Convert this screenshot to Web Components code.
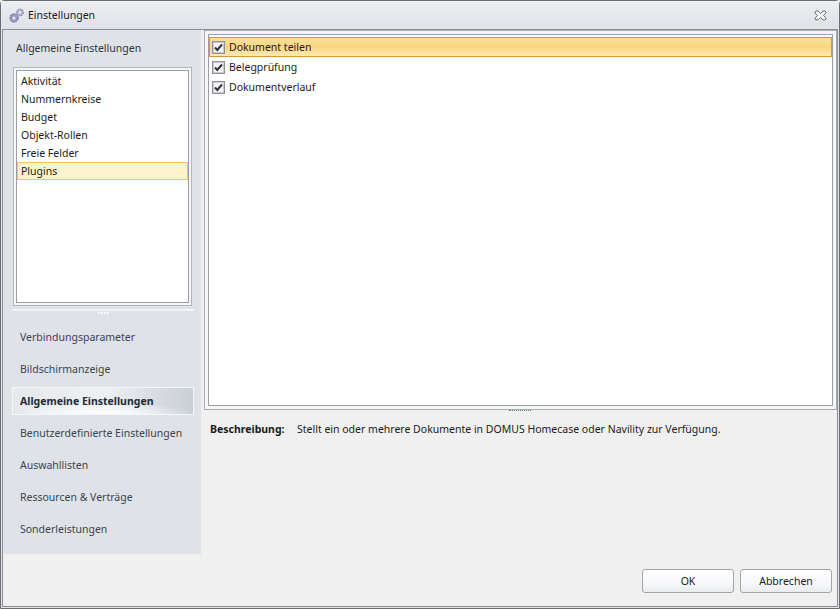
<!DOCTYPE html>
<html lang="de">
<head>
<meta charset="utf-8">
<title>Einstellungen</title>
<style>
    html, body { margin: 0; height: 100%; overflow: hidden; background: #f0f0f0; }
    body { font: 10.5px "Noto Sans", "DejaVu Sans", sans-serif; color: #1b1b1b; }
</style>
</head>
<body>
<settings-window title-text="Einstellungen">
    <nav-panel slot="side" heading="Allgemeine Einstellungen">
        <list-box slot="list">
            <list-row>Aktivität</list-row>
            <list-row>Nummernkreise</list-row>
            <list-row>Budget</list-row>
            <list-row>Objekt-Rollen</list-row>
            <list-row>Freie Felder</list-row>
            <list-row selected>Plugins</list-row>
        </list-box>
        <nav-item>Verbindungsparameter</nav-item>
        <nav-item>Bildschirmanzeige</nav-item>
        <nav-item active>Allgemeine Einstellungen</nav-item>
        <nav-item>Benutzerdefinierte Einstellungen</nav-item>
        <nav-item>Auswahllisten</nav-item>
        <nav-item>Ressourcen &amp; Verträge</nav-item>
        <nav-item>Sonderleistungen</nav-item>
    </nav-panel>
    <check-list slot="main">
        <check-row focused>Dokument teilen</check-row>
        <check-row>Belegprüfung</check-row>
        <check-row>Dokumentverlauf</check-row>
    </check-list>
    <description-line slot="main" label="Beschreibung:">Stellt ein oder mehrere Dokumente in DOMUS Homecase oder Navility zur Verfügung.</description-line>
    <dialog-button slot="buttons">OK</dialog-button>
    <dialog-button slot="buttons">Abbrechen</dialog-button>
</settings-window>

<script>
class SettingsWindow extends HTMLElement {
    constructor() {
        super();
        this.attachShadow({ mode: 'open' });
    }

    connectedCallback() {
        const title = this.getAttribute('title-text') || '';
        this.shadowRoot.innerHTML = `
            <style>
                :host {
                    display: flex;
                    flex-direction: column;
                    width: 840px;
                    height: 609px;
                    box-sizing: border-box;
                    border: 1px solid #6d6e72;
                    border-radius: 4px 4px 0 0;
                    background: #e2e5ea;
                }
                .bar {
                    flex: none;
                    height: 28px;
                    display: flex;
                    align-items: center;
                    gap: 3px;
                    padding: 0 8px 0 7px;
                    background: linear-gradient(#eceef1, #dfe2e7);
                    font-size: 10.5px;
                    color: #1a1a2a;
                }
                .bar svg.gear { width: 17px; height: 17px; }
                .bar span { flex: 1; }
                .bar svg.close { width: 13px; height: 11px; margin-right: 4px; }
                .frame {
                    flex: 1;
                    min-height: 0;
                    display: flex;
                    flex-direction: column;
                    margin: 0 1px 1px 1px;
                    border: 1px solid #8e9094;
                    background: #f0f0f0;
                }
                .body { flex: none; height: 524px; display: flex; }
                .side { flex: none; width: 198px; }
                .main { flex: 1; display: flex; flex-direction: column; padding-left: 3px; }
                .foot {
                    flex: 1;
                    display: flex;
                    justify-content: flex-end;
                    align-items: flex-start;
                    gap: 6px;
                    padding: 15px 5px 0 0;
                }
            </style>
            <div class="bar">
                <svg class="gear" viewBox="0 0 17 17">
                    <circle cx="6" cy="11" r="4.2" fill="#9a9bc4" stroke="#6d6e96" stroke-width="1" stroke-dasharray="2 1"/>
                    <circle cx="6" cy="11" r="1.5" fill="#eef"/>
                    <circle cx="12" cy="5.5" r="3.4" fill="#b4b5d4" stroke="#7a7ba2" stroke-width="1" stroke-dasharray="1.6 .9"/>
                    <circle cx="12" cy="5.5" r="1.2" fill="#f4f4fb"/>
                </svg>
                <span>${title}</span>
                <svg class="close" viewBox="0 0 13 11">
                    <path d="M1 2 2 1H4L6.5 3.5 9 1H11L12 2V3L9.5 5.5 12 8V9L11 10H9L6.5 7.5 4 10H2L1 9V8L3.5 5.5 1 3Z" fill="#f2f3f5" stroke="#6f7176"/>
                </svg>
            </div>
            <div class="frame">
                <div class="body">
                    <div class="side"><slot name="side"></slot></div>
                    <div class="main"><slot name="main"></slot></div>
                </div>
                <div class="foot"><slot name="buttons"></slot></div>
            </div>
        `;
    }
}

class NavPanel extends HTMLElement {
    constructor() {
        super();
        this.attachShadow({ mode: 'open' });
    }

    connectedCallback() {
        const heading = this.getAttribute('heading') || '';
        this.shadowRoot.innerHTML = `
            <style>
                :host {
                    display: block;
                    height: 100%;
                    background: #dfe3e8;
                    color: #2c3440;
                }
                .head { height: 37px; padding: 11px 0 0 13px; box-sizing: border-box; line-height: 14px; }
                .well {
                    width: 179px;
                    height: 239px;
                    margin-left: 10px;
                    padding: 2px;
                    box-sizing: border-box;
                    border: 1px solid #b4b6ba;
                    background: #f5f6f7;
                }
                .grip {
                    height: 8px;
                    margin: 3px 7px 0 9px;
                    width: 182px;
                    border-top: 2px solid #f3f4f6;
                    display: flex;
                    justify-content: center;
                    gap: 1px;
                    padding-top: 1px;
                }
                .grip i { width: 2px; height: 2px; background: #f6f7f8; }
                .items { display: flex; flex-direction: column; padding: 3px 0 0 9px; }
            </style>
            <div class="head">${heading}</div>
            <div class="well"><slot name="list"></slot></div>
            <div class="grip"><i></i><i></i><i></i><i></i></div>
            <div class="items"><slot></slot></div>
        `;
    }
}

class ListBox extends HTMLElement {
    constructor() {
        super();
        this.attachShadow({ mode: 'open' }).innerHTML = `
            <style>
                :host {
                    display: block;
                    height: 100%;
                    box-sizing: border-box;
                    border: 1px solid #9c9ea3;
                    background: #fff;
                    color: #1b1b1b;
                    padding-top: 1px;
                }
            </style>
            <slot></slot>
        `;
    }
}

class ListRow extends HTMLElement {
    constructor() {
        super();
        this.attachShadow({ mode: 'open' }).innerHTML = `
            <style>
                :host {
                    display: block;
                    height: 18px;
                    line-height: 16px;
                    box-sizing: border-box;
                    padding-left: 3px;
                    border: 1px solid transparent;
                }
                :host([selected]) {
                    background: #fff3cd;
                    border-color: #fdbf6a;
                }
            </style>
            <slot></slot>
        `;
    }
}

class NavItem extends HTMLElement {
    constructor() {
        super();
        this.attachShadow({ mode: 'open' }).innerHTML = `
            <style>
                :host {
                    display: block;
                    width: 182px;
                    height: 28px;
                    margin-bottom: 4px;
                    box-sizing: border-box;
                    padding-left: 7px;
                    line-height: 26px;
                    border: 1px solid transparent;
                    color: #3a4350;
                }
                :host([active]) {
                    font-weight: 700;
                    color: #232b36;
                    border-color: #f6f7f8;
                    background:
                        radial-gradient(90px 12px at 50% 100%, #ffffff, rgba(255,255,255,0)),
                        linear-gradient(90deg, #e6e8ec, #eef0f3 50%, #c9ced6);
                }
            </style>
            <slot></slot>
        `;
    }
}

class CheckList extends HTMLElement {
    constructor() {
        super();
        this.attachShadow({ mode: 'open' }).innerHTML = `
            <style>
                :host {
                    display: block;
                    height: 380px;
                    margin-top: 0;
                    box-sizing: border-box;
                    border: 1px solid #a9abaf;
                    padding: 3px;
                    background: #f5f6f7;
                }
                .inner {
                    height: 100%;
                    box-sizing: border-box;
                    border: 1px solid #9c9ea3;
                    background: #fff;
                    padding-top: 2px;
                }
            </style>
            <div class="inner"><slot></slot></div>
        `;
    }
}

class CheckRow extends HTMLElement {
    constructor() {
        super();
        this.attachShadow({ mode: 'open' }).innerHTML = `
            <style>
                :host {
                    display: flex;
                    align-items: center;
                    gap: 4px;
                    height: 20px;
                    box-sizing: border-box;
                    padding-left: 2px;
                    border: 1px solid transparent;
                    color: #1b1b1b;
                }
                :host([focused]) {
                    border-color: #d8953f;
                    background: linear-gradient(#fbdf9d, #f9d67f 50%, #fdeab8);
                }
                svg { width: 13px; height: 13px; flex: none; }
            </style>
            <svg viewBox="0 0 13 13">
                <rect x=".5" y=".5" width="12" height="12" fill="#e9eaee" stroke="#8f9196"/>
                <rect x="1.5" y="1.5" width="10" height="10" fill="#f4f4f6" stroke="#c9cbd0"/>
                <path d="M3 6.5 5.3 9 10 3.5" fill="none" stroke="#303236" stroke-width="2"/>
            </svg>
            <slot></slot>
        `;
    }
}

class DescriptionLine extends HTMLElement {
    constructor() {
        super();
        this.attachShadow({ mode: 'open' });
    }

    connectedCallback() {
        const label = this.getAttribute('label') || '';
        this.shadowRoot.innerHTML = `
            <style>
                :host {
                    display: flex;
                    position: relative;
                    padding: 12px 0 0 6px;
                    line-height: 14px;
                    color: #1b1b1b;
                }
                b { width: 87px; flex: none; }
                .grip {
                    position: absolute;
                    top: 0;
                    left: 305px;
                    width: 22px;
                    height: 1px;
                    border-top: 1px dotted #5d8a6f;
                }
            </style>
            <div class="grip"></div>
            <b>${label}</b>
            <span><slot></slot></span>
        `;
    }
}

class DialogButton extends HTMLElement {
    constructor() {
        super();
        this.attachShadow({ mode: 'open' }).innerHTML = `
            <style>
                :host {
                    display: block;
                    width: 92px;
                    height: 24px;
                    box-sizing: border-box;
                    border: 1px solid #a3a5a9;
                    border-radius: 3px;
                    background: linear-gradient(#ffffff, #f7f8fa 60%, #e9ebee);
                    text-align: center;
                    line-height: 22px;
                    color: #1b1b1b;
                }
            </style>
            <slot></slot>
        `;
    }
}

customElements.define('settings-window', SettingsWindow);
customElements.define('nav-panel', NavPanel);
customElements.define('list-box', ListBox);
customElements.define('list-row', ListRow);
customElements.define('nav-item', NavItem);
customElements.define('check-list', CheckList);
customElements.define('check-row', CheckRow);
customElements.define('description-line', DescriptionLine);
customElements.define('dialog-button', DialogButton);
</script>
</body>
</html>
